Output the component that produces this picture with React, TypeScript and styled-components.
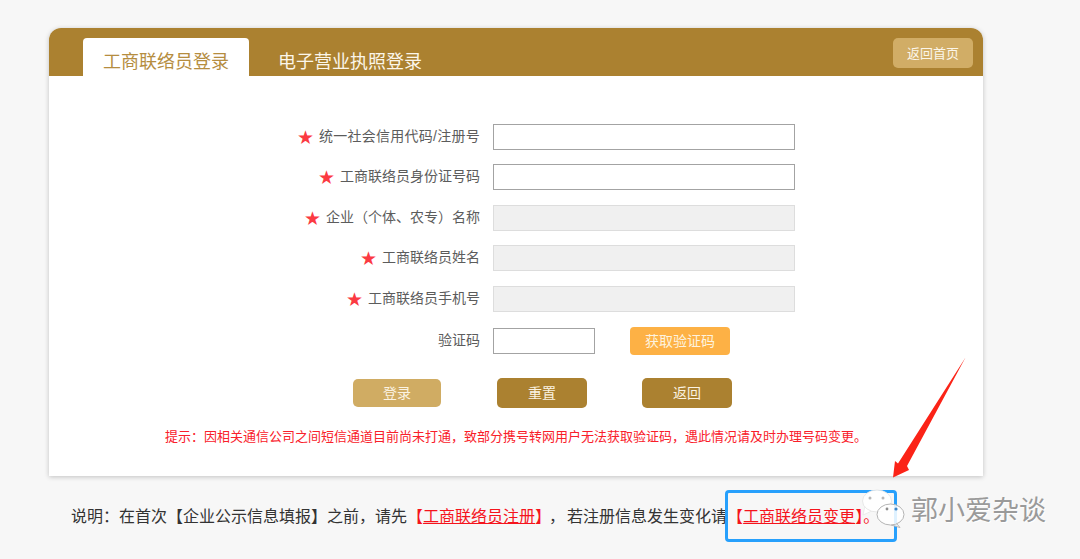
import React from 'react';
import styled, { createGlobalStyle } from 'styled-components';

const Global = createGlobalStyle`
    html, body {
        margin: 0;
        padding: 0;
        background-color: #f7f7f7;
        font-family: "Liberation Sans", "Noto Sans CJK SC", sans-serif;
    }
`;

const Page = styled.div`
    position: relative;
    width: 1080px;
    height: 559px;
    padding: 28px 0 0 49px;
    box-sizing: border-box;
    overflow: hidden;
`;

const Card = styled.div`
    width: 934px;
    height: 448px;
    background-color: #ffffff;
    border-radius: 12px 12px 0 0;
    box-shadow: 0 1px 5px rgba(0, 0, 0, 0.22);
`;

const Header = styled.div`
    display: flex;
    align-items: flex-end;
    height: 48px;
    padding: 0 10px 0 34px;
    background-color: #ab8130;
    border-radius: 12px 12px 0 0;
`;

const Tab = styled.div<{ $active?: boolean }>`
    width: ${({ $active }) => ($active ? '166px' : '175px')};
    height: 38px;
    line-height: 48px;
    margin-left: ${({ $active }) => ($active ? '0' : '29px')};
    text-align: ${({ $active }) => ($active ? 'center' : 'left')};
    font-size: 18px;
    color: ${({ $active }) => ($active ? '#b58d3f' : '#fbf6ea')};
    background-color: ${({ $active }) => ($active ? '#ffffff' : 'transparent')};
    border-radius: 4px 4px 0 0;
`;

const HomeButton = styled.div`
    width: 80px;
    height: 30px;
    line-height: 31px;
    margin: 0 0 8px auto;
    text-align: center;
    font-size: 13px;
    color: #fbf6ea;
    background-color: #d1ad66;
    border-radius: 5px;
`;

const Form = styled.div`
    display: grid;
    grid-template-columns: 431px 302px;
    grid-auto-rows: 26.5px;
    column-gap: 13px;
    row-gap: 14px;
    padding-top: 47.5px;
    align-items: center;
`;

const Label = styled.div`
    display: flex;
    justify-content: flex-end;
    align-items: center;
    height: 20px;
    margin-top: -4px;
    font-size: 14px;
    color: #5c5c5c;
    white-space: nowrap;
`;

const CodeLabel = styled(Label)`
    margin-top: 0;
`;

const Star = styled.span`
    margin: 4px 5px 0 0;
    font-family: "DejaVu Sans", sans-serif;
    font-size: 19px;
    line-height: 20px;
    color: #fb3a42;
`;

const Wide = styled.span`
    letter-spacing: 0.25px;
`;

const Input = styled.div<{ $disabled?: boolean }>`
    height: 26px;
    box-sizing: border-box;
    background-color: ${({ $disabled }) => ($disabled ? '#f0f0f0' : '#ffffff')};
    border: 1px solid ${({ $disabled }) => ($disabled ? '#dddddd' : '#a3a3a3')};
`;

const CodeRow = styled.div`
    display: flex;
    align-items: center;
    margin-top: 3px;
`;

const CodeInput = styled(Input)`
    width: 102px;
`;

const CodeButton = styled.div`
    width: 100px;
    height: 28px;
    line-height: 29px;
    margin-left: 35px;
    text-align: center;
    font-size: 14px;
    color: #fdf3df;
    background-color: #fdb145;
    border-radius: 4px;
`;

const Actions = styled.div`
    display: flex;
    align-items: center;
    margin-top: 25.5px;
    padding-left: 304px;
`;

const ActionButton = styled.div<{ $light?: boolean; $gap: number }>`
    width: ${({ $light }) => ($light ? '88px' : '90px')};
    height: ${({ $light }) => ($light ? '28px' : '30px')};
    line-height: ${({ $light }) => ($light ? '29px' : '31px')};
    margin-left: ${({ $gap }) => $gap}px;
    text-align: center;
    font-size: 14px;
    color: #fbf3e2;
    background-color: ${({ $light }) => ($light ? '#d0ac63' : '#ab8130')};
    border-radius: 5px;
`;

const Notice = styled.div`
    margin-top: 21px;
    text-align: center;
    font-size: 13px;
    line-height: 16px;
    color: #f9202a;
    white-space: nowrap;
`;

const Note = styled.div`
    margin: 31px 0 0 22px;
    font-size: 16px;
    line-height: 20px;
    color: #333333;
    white-space: nowrap;
`;

const RedLink = styled.span`
    color: #f5141c;
`;

const RedLine = styled.span`
    text-decoration: underline;
`;

const Comma = styled.span`
    margin: 0 2px 0 6px;
`;

const Highlight = styled.div`
    position: absolute;
    left: 725px;
    top: 490px;
    width: 172px;
    height: 52px;
    box-sizing: border-box;
    border: 3px solid #27a0fc;
    border-radius: 4px;
`;

const Arrow = styled.svg`
    position: absolute;
    left: 885px;
    top: 350px;
`;

const WeChat = styled.svg`
    position: absolute;
    left: 858px;
    top: 488px;
`;

const Watermark = styled.div`
    position: absolute;
    left: 911px;
    top: 494px;
    font-size: 27px;
    line-height: 34px;
    color: #9a9a9a;
    text-shadow: 1px 1px 0 #ffffff;
    white-space: nowrap;
`;

export default function App() {
    return (
        <Page>
            <Global />
            <Card>
                <Header>
                    <Tab $active>工商联络员登录</Tab>
                    <Tab>电子营业执照登录</Tab>
                    <HomeButton>返回首页</HomeButton>
                </Header>
                <Form>
                    <Label><Star>★</Star><Wide>统一社会信用代码/注册号</Wide></Label>
                    <Input />
                    <Label><Star>★</Star>工商联络员身份证号码</Label>
                    <Input />
                    <Label><Star>★</Star>企业（个体、农专）名称</Label>
                    <Input $disabled />
                    <Label><Star>★</Star>工商联络员姓名</Label>
                    <Input $disabled />
                    <Label><Star>★</Star>工商联络员手机号</Label>
                    <Input $disabled />
                    <CodeLabel>验证码</CodeLabel>
                    <CodeRow>
                        <CodeInput />
                        <CodeButton>获取验证码</CodeButton>
                    </CodeRow>
                </Form>
                <Actions>
                    <ActionButton $light $gap={0}>登录</ActionButton>
                    <ActionButton $gap={56}>重置</ActionButton>
                    <ActionButton $gap={55}>返回</ActionButton>
                </Actions>
                <Notice>提示：因相关通信公司之间短信通道目前尚未打通，致部分携号转网用户无法获取验证码，遇此情况请及时办理号码变更。</Notice>
            </Card>
            <Note>
                说明：在首次【企业公示信息填报】之前，请先<RedLink>【<RedLine>工商联络员注册</RedLine>】</RedLink><Comma>，</Comma>若注册信息发生变化请<RedLink>【<RedLine>工商联络员变更</RedLine>】。</RedLink>
            </Note>
            <Highlight />
            <Arrow width="85" height="132" viewBox="0 0 85 132">
                <path d="M80.5 7.5 L22 116 L24 120 L8 127.5 L10 111 L13 113.5 Z" fill="#fb2317" />
            </Arrow>
            <WeChat width="52" height="56" viewBox="0 0 52 56">
                <path d="M5 27 L7 18 L16 22 Z" fill="#ffffff" stroke="#e2e2e2" strokeWidth="0.6" />
                <ellipse cx="19" cy="13" rx="14.5" ry="11" fill="#ffffff" stroke="#e2e2e2" strokeWidth="0.8" />
                <circle cx="12" cy="10" r="1.5" fill="#b8b8b8" />
                <circle cx="25" cy="10" r="1.5" fill="#b8b8b8" />
                <path d="M38 35 L42 39.5 L33 37" fill="#ffffff" fillOpacity="0.85" stroke="#b5b5b5" strokeWidth="1" />
                <ellipse cx="32.5" cy="26.5" rx="13.5" ry="10.5" fill="#ffffff" fillOpacity="0.85" stroke="#b5b5b5" strokeWidth="1" />
                <circle cx="29" cy="21" r="1.4" fill="#8d8d8d" />
                <circle cx="38" cy="21" r="1.6" fill="#3f86c6" />
            </WeChat>
            <Watermark>郭小爱杂谈</Watermark>
        </Page>
    );
}
